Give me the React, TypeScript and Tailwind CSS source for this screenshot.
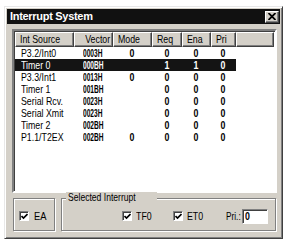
import React from "react";

type Row = { src: string; vec: string; mode: string; req: string; ena: string; pri: string; sel?: boolean };

const rows: Row[] = [
  { src: "P3.2/Int0", vec: "0003H", mode: "0", req: "0", ena: "0", pri: "0" },
  { src: "Timer 0", vec: "000BH", mode: "", req: "1", ena: "1", pri: "0", sel: true },
  { src: "P3.3/Int1", vec: "0013H", mode: "0", req: "0", ena: "0", pri: "0" },
  { src: "Timer 1", vec: "001BH", mode: "", req: "0", ena: "0", pri: "0" },
  { src: "Serial Rcv.", vec: "0023H", mode: "", req: "0", ena: "0", pri: "0" },
  { src: "Serial Xmit", vec: "0023H", mode: "", req: "0", ena: "0", pri: "0" },
  { src: "Timer 2", vec: "002BH", mode: "", req: "0", ena: "0", pri: "0" },
  { src: "P1.1/T2EX", vec: "002BH", mode: "0", req: "0", ena: "0", pri: "0" },
];

function Hdr({ w, label, right }: { w: string; label: string; right?: boolean }) {
  return (
    <div
      className={`${w} h-full shrink-0 flex items-center ${right ? "justify-end pr-[2px]" : "pl-[4px]"} border border-t-white border-l-white border-b-[#404040] border-r-[#404040] shadow-[inset_-1px_-1px_0_#808080] overflow-hidden`}
    >
      <span className={`inline-block ${right ? "origin-right" : "origin-left"} scale-x-[0.8] whitespace-nowrap`}>{label}</span>
    </div>
  );
}

function Check() {
  return (
    <div className="w-[10px] h-[10px] shrink-0 bg-white border border-t-[#808080] border-l-[#808080] border-b-white border-r-white shadow-[inset_1px_1px_0_#404040] flex items-center justify-center">
      <svg width="7" height="7" viewBox="0 0 7 7">
        <path d="M0.5 3 L2.5 5 L6.5 1" stroke="black" strokeWidth="1.7" fill="none" />
      </svg>
    </div>
  );
}

export default function App() {
  return (
    <div className="w-[286px] h-[242px] bg-white pt-[6px] pl-[4px] font-['Liberation_Sans',Arial,sans-serif] text-[11px] leading-none text-black">
      <div className="w-[279px] h-[233px] bg-[#d4d0c8] border border-t-[#e8e8e8] border-l-[#e8e8e8] border-b-[#404040] border-r-[#404040] shadow-[inset_1px_1px_0_#fff,inset_-1px_-1px_0_#808080] p-[2px] flex flex-col">
        {/* Title bar */}
        <div className="h-[15px] bg-[#111] flex items-center justify-between pl-[3px] pr-[1px]">
          <span className="text-white font-bold text-[11px] tracking-[-0.3px]">Interrupt System</span>
          <div className="w-[14px] h-[12px] bg-[#d4d0c8] border border-t-white border-l-white border-b-[#404040] border-r-[#404040] shadow-[inset_-1px_-1px_0_#808080] flex items-center justify-center">
            <svg width="8" height="7" viewBox="0 0 8 7">
              <path d="M0.5 0 L7.5 7 M7.5 0 L0.5 7" stroke="black" strokeWidth="1.8" />
            </svg>
          </div>
        </div>

        {/* List */}
        <div className="ml-[5px] mt-[5px] w-[265px] h-[164px] bg-white border-2 border-t-[#808080] border-l-[#808080] border-b-white border-r-white shadow-[inset_1px_1px_0_#404040] p-[1px] flex flex-col">
          <div className="h-[15px] flex bg-[#d4d0c8]">
            <Hdr w="w-[59px]" label="Int Source" />
            <Hdr w="w-[39px]" label="Vector" right />
            <Hdr w="w-[39px]" label="Mode" />
            <Hdr w="w-[30px]" label="Req" />
            <Hdr w="w-[29px]" label="Ena" />
            <Hdr w="w-[25px]" label="Pri" />
            <div className="flex-1 h-full border border-t-white border-l-white border-b-[#404040] border-r-[#404040] shadow-[inset_-1px_-1px_0_#808080]" />
          </div>
          <div className="flex flex-col">
            {rows.map((r) => (
              <div
                key={r.src}
                className={`h-[12px] w-[221px] flex items-center ${r.sel ? "bg-[#141414] text-white" : ""}`}
              >
                <div className="w-[59px] shrink-0 pl-[6px]">
                  <span className="inline-block origin-left scale-x-[0.8] whitespace-nowrap">{r.src}</span>
                </div>
                <div className="w-[39px] shrink-0 pl-[9px]">
                  <span className="inline-block origin-left scale-x-[0.6] whitespace-nowrap font-bold">{r.vec}</span>
                </div>
                <div className="w-[39px] shrink-0 text-center">
                  <span className="inline-block scale-x-[0.8] font-bold">{r.mode}</span>
                </div>
                <div className="w-[30px] shrink-0 text-center">
                  <span className="inline-block scale-x-[0.8] font-bold">{r.req}</span>
                </div>
                <div className="w-[29px] shrink-0 text-center">
                  <span className="inline-block scale-x-[0.8] font-bold">{r.ena}</span>
                </div>
                <div className="w-[25px] shrink-0 text-center">
                  <span className="inline-block scale-x-[0.8] font-bold">{r.pri}</span>
                </div>
              </div>
            ))}
          </div>
        </div>

        {/* Bottom groups */}
        <div className="mt-[5px] ml-[6px] flex gap-[6px] h-[33px]">
          <div className="w-[42px] h-full border border-[#808080] shadow-[inset_1px_1px_0_#fff,1px_1px_0_#fff] flex items-center pl-[5px] pt-[3px] gap-[5px]">
            <Check />
            <span className="inline-block origin-left scale-x-[0.85]">EA</span>
          </div>
          <div className="relative w-[215px] h-full border border-[#808080] shadow-[inset_1px_1px_0_#fff,1px_1px_0_#fff] flex items-center pt-[3px]">
            <span className="absolute left-[4px] top-[-7px] bg-[#d4d0c8] px-[2px] whitespace-nowrap">
              <span className="inline-block origin-left scale-x-[0.78]">Selected Interrupt</span>
            </span>
            <div className="ml-[60px] w-[51px] shrink-0 flex items-center gap-[4px]">
              <Check />
              <span className="inline-block origin-left scale-x-[0.8]">TF0</span>
            </div>
            <div className="w-[53px] shrink-0 flex items-center gap-[4px]">
              <Check />
              <span className="inline-block origin-left scale-x-[0.8]">ET0</span>
            </div>
            <div className="w-[16px] shrink-0">
              <span className="inline-block origin-left scale-x-[0.75] whitespace-nowrap">Pri.:</span>
            </div>
            <div className="w-[26px] h-[15px] shrink-0 bg-white border border-t-[#808080] border-l-[#808080] border-b-white border-r-white shadow-[inset_1px_1px_0_#404040] flex items-center pl-[2px]">
              <span className="inline-block origin-left scale-x-[0.8] font-bold">0</span>
            </div>
          </div>
        </div>
      </div>
    </div>
  );
}
